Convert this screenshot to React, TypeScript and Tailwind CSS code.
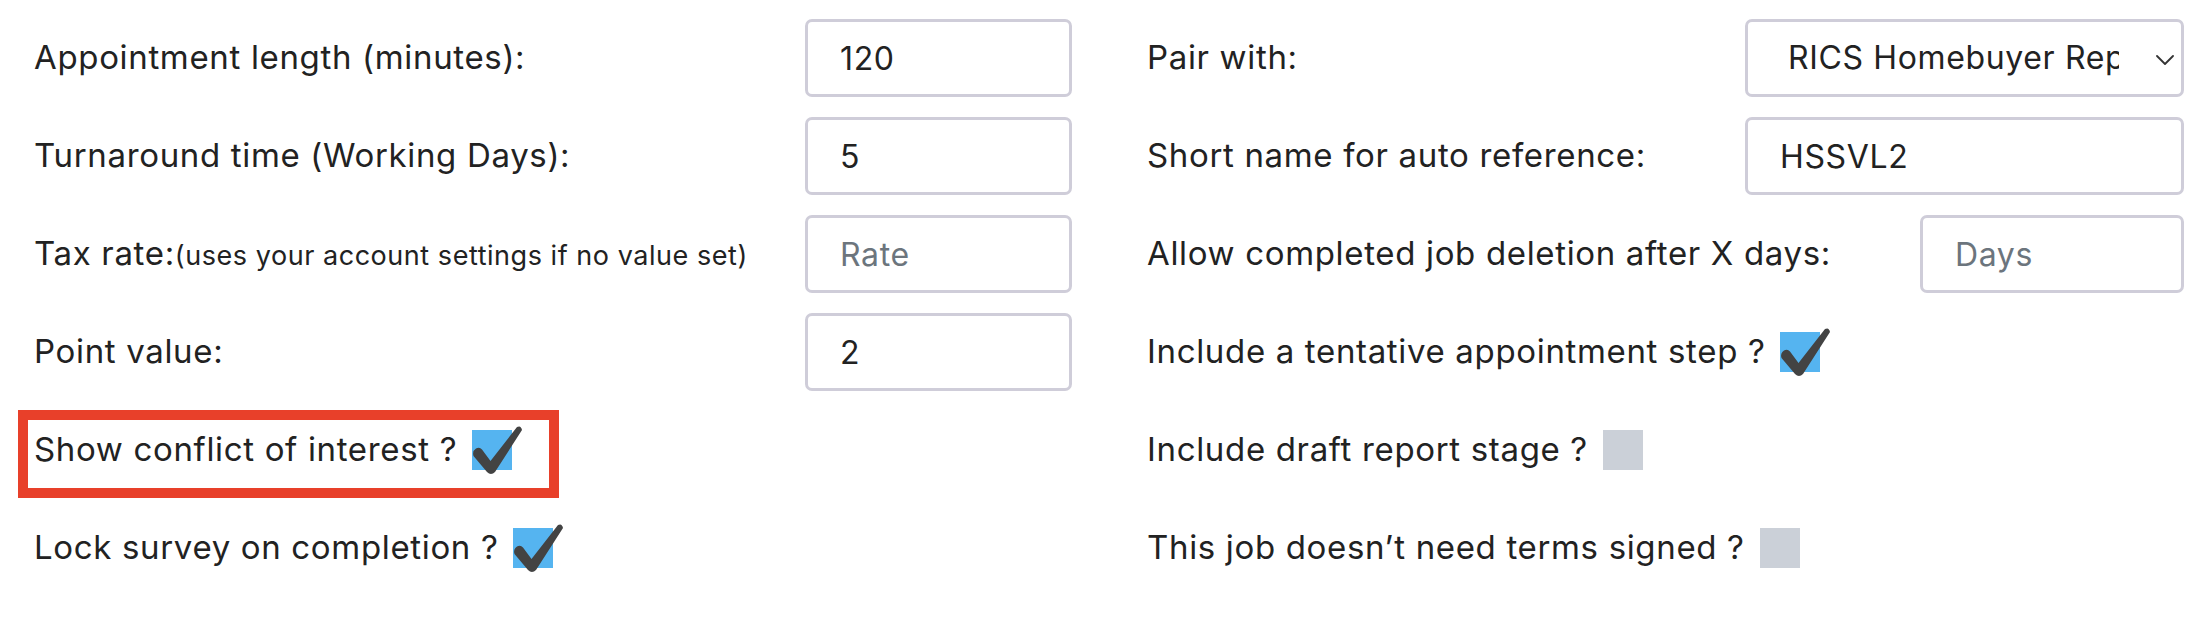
import React from "react";

const font = { fontFamily: "Inter, 'Liberation Sans', sans-serif" };

const Check = ({ on }: { on: boolean }) => {
    if (!on) return <span className="inline-block w-[40px] h-[40px] bg-[#cbd0d8] ml-[15px] shrink-0" />;
    return (
        <span className="relative inline-block w-[40px] h-[40px] bg-[#55b4f0] ml-[15px] shrink-0">
            <svg className="absolute left-[-2px] top-[-6px]" width="56" height="54" viewBox="-2 -6 56 54">
                <path
                    d="M45 -3 Q49 -5 50 0 L23 42 Q19 46 15 42 L1.5 26 Q0 21 4 18.5 Q7.5 16.5 10 19.5 L18.5 31 Z"
                    fill="#434343"
                />
            </svg>
        </span>
    );
};

const TextBox = ({ value, placeholder, w }: { value?: string; placeholder?: string; w: string }) => (
    <input
        readOnly
        value={value ?? ""}
        placeholder={placeholder}
        className={`${w} h-[78px] shrink-0 border-[3px] border-[#cfcdd9] rounded-[7px] px-[32px] text-[32px] tracking-[0.02em] text-[#222] placeholder:text-[#6c757d] bg-white outline-none`}
        style={font}
    />
);

const Row = ({ children, highlight }: { children: React.ReactNode; highlight?: boolean }) => (
    <div className="relative flex items-center justify-between h-[78px]">
        {children}
        {highlight && (
            <div className="absolute left-[-16px] top-[-1px] w-[541px] h-[88px] border-[10px] border-[#e8402a] pointer-events-none" />
        )}
    </div>
);

const Label = ({ children }: { children: React.ReactNode }) => (
    <span className="text-[33px] tracking-[0.02em] text-[#222] whitespace-nowrap">{children}</span>
);

export default function App() {
    return (
        <div className="w-[2212px] h-[618px] bg-white flex gap-[75px] pl-[34px] pt-[19px] overflow-hidden" style={font}>
            {/* left column */}
            <div className="w-[1038px] flex flex-col gap-[20px]">
                <Row>
                    <Label>Appointment length (minutes):</Label>
                    <TextBox value="120" w="w-[267px]" />
                </Row>
                <Row>
                    <Label>Turnaround time (Working Days):</Label>
                    <TextBox value="5" w="w-[267px]" />
                </Row>
                <Row>
                    <span className="whitespace-nowrap text-[#222]">
                        <span className="text-[33px] tracking-[0.02em]">Tax rate:</span>
                        <span className="text-[27px] tracking-[0.02em]">(uses your account settings if no value set)</span>
                    </span>
                    <TextBox placeholder="Rate" w="w-[267px]" />
                </Row>
                <Row>
                    <Label>Point value:</Label>
                    <TextBox value="2" w="w-[267px]" />
                </Row>
                <Row highlight>
                    <div className="flex items-center">
                        <Label>Show conflict of interest ?</Label>
                        <Check on />
                    </div>
                </Row>
                <Row>
                    <div className="flex items-center">
                        <Label>Lock survey on completion ?</Label>
                        <Check on />
                    </div>
                </Row>
            </div>

            {/* right column */}
            <div className="w-[1037px] flex flex-col gap-[20px]">
                <Row>
                    <Label>Pair with:</Label>
                    <div className="relative w-[439px] h-[78px] shrink-0">
                        <select
                            className="appearance-none w-full h-full border-[3px] border-[#cfcdd9] rounded-[7px] pl-[40px] pr-[62px] text-[32px] tracking-[0.02em] text-[#222] bg-white outline-none"
                            style={font}
                            defaultValue="rics"
                        >
                            <option value="rics">RICS Homebuyer Report - Level 2</option>
                        </select>
                        <svg className="absolute right-[10px] top-[36px] pointer-events-none" width="18" height="10" viewBox="0 0 18 10">
                            <path d="M1 1 L9 9 L17 1" fill="none" stroke="#333" strokeWidth="1.8" strokeLinecap="round" strokeLinejoin="round" />
                        </svg>
                    </div>
                </Row>
                <Row>
                    <Label>Short name for auto reference:</Label>
                    <TextBox value="HSSVL2" w="w-[439px]" />
                </Row>
                <Row>
                    <Label>Allow completed job deletion after X days:</Label>
                    <TextBox placeholder="Days" w="w-[264px]" />
                </Row>
                <Row>
                    <div className="flex items-center">
                        <Label>Include a tentative appointment step ?</Label>
                        <Check on />
                    </div>
                </Row>
                <Row>
                    <div className="flex items-center">
                        <Label>Include draft report stage ?</Label>
                        <Check on={false} />
                    </div>
                </Row>
                <Row>
                    <div className="flex items-center">
                        <Label>This job doesn’t need terms signed ?</Label>
                        <Check on={false} />
                    </div>
                </Row>
            </div>
        </div>
    );
}
